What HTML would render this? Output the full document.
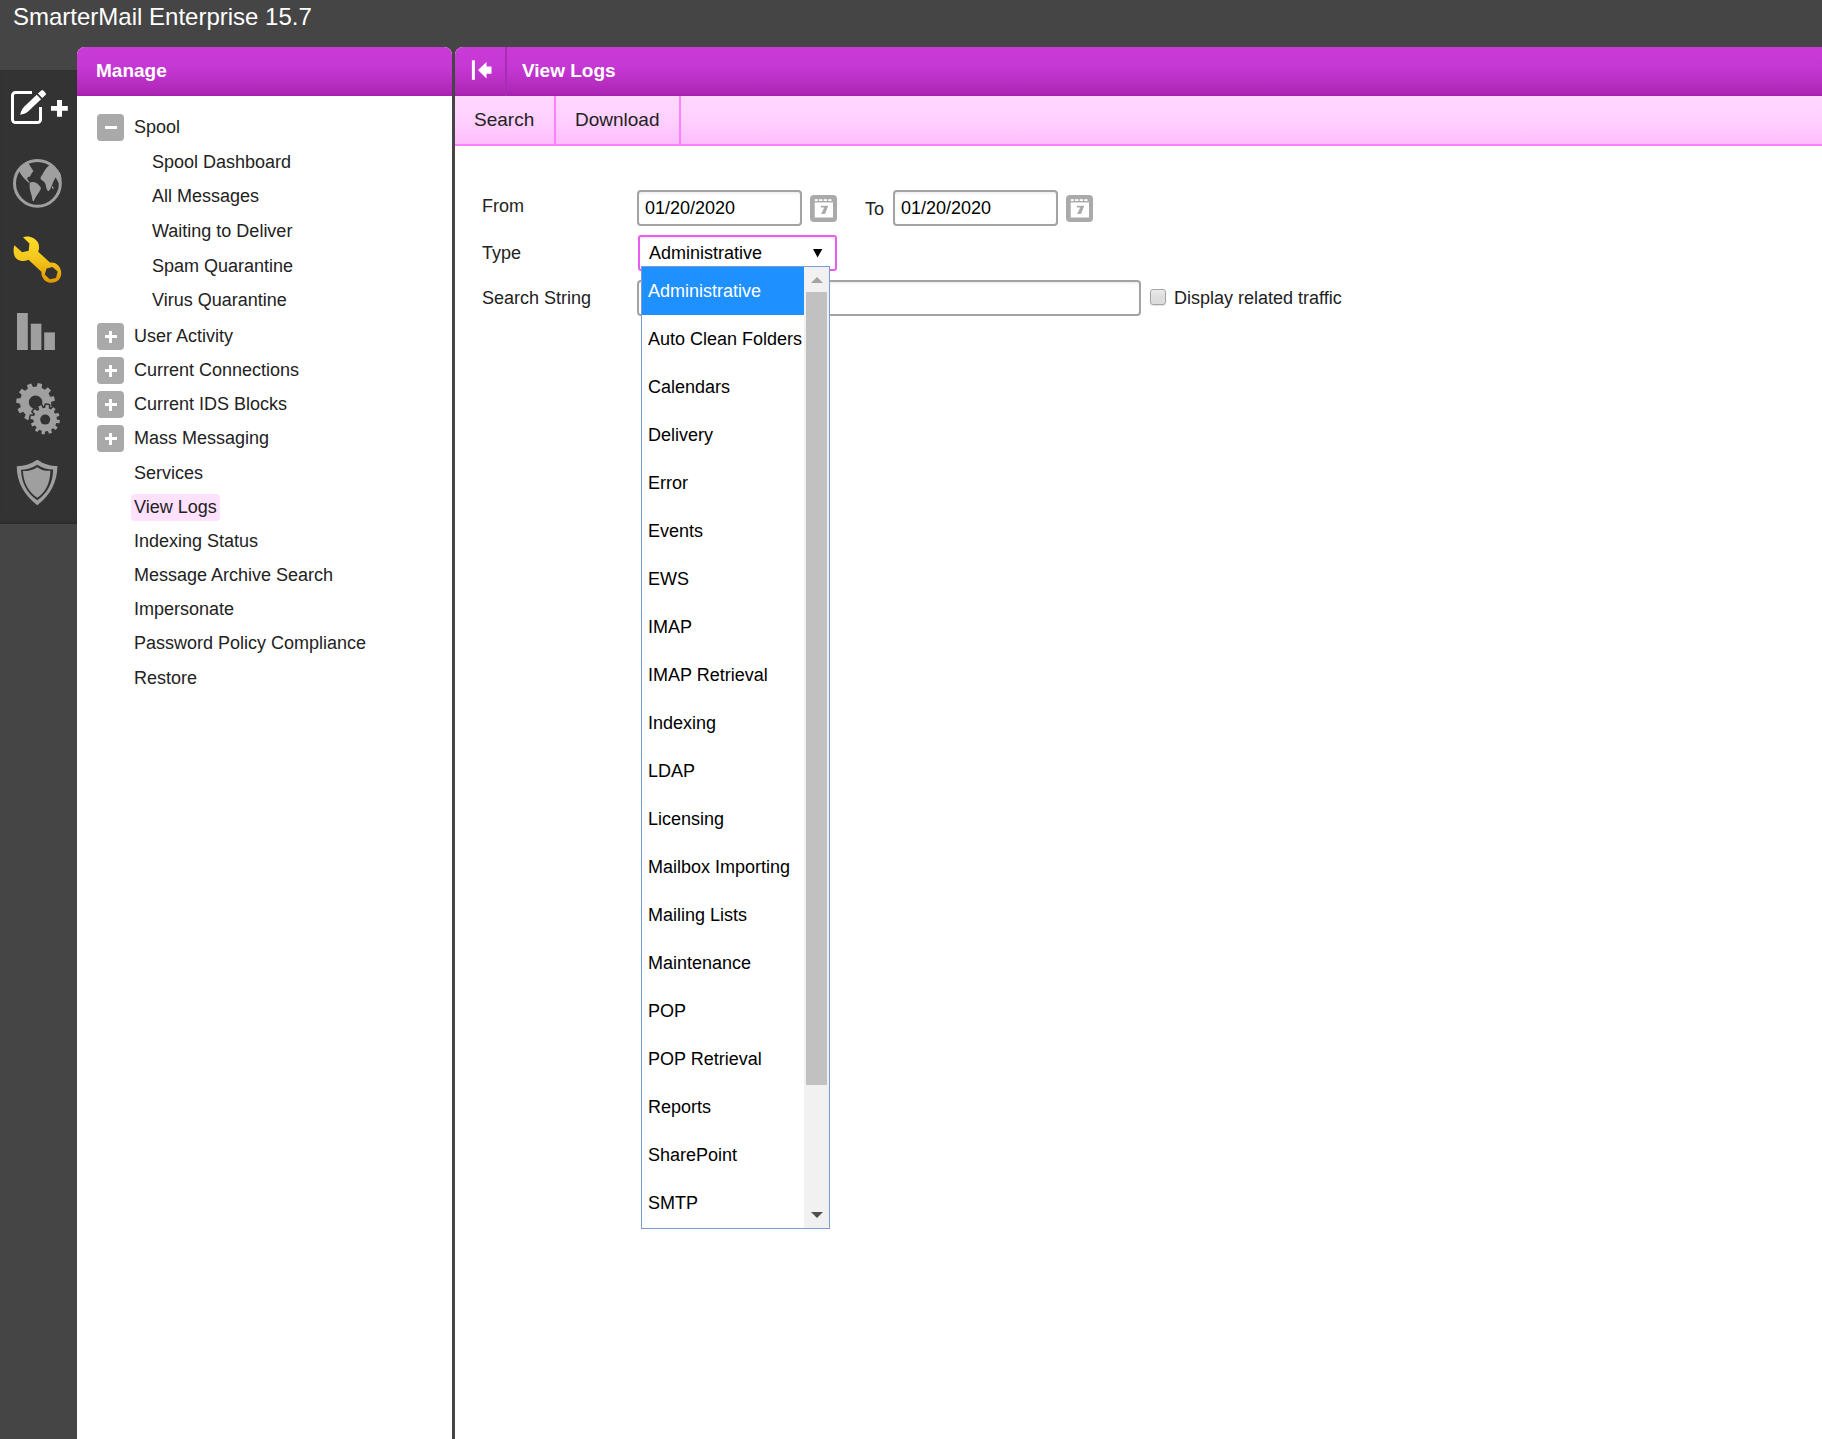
<!DOCTYPE html>
<html><head><meta charset="utf-8">
<style>
*{box-sizing:border-box;margin:0;padding:0}
html,body{width:1822px;height:1439px;overflow:hidden;background:#454545;font-family:"Liberation Sans",sans-serif;font-size:18px;color:#222}
.abs{position:absolute}
.t{position:absolute;white-space:nowrap;line-height:20px}
#title{left:13px;top:3px;font-size:24px;color:#fff;line-height:28px}
#rail{left:0;top:70px;width:77px;height:454px;background:#333;box-shadow:inset 0 -3px 3px -1px rgba(0,0,0,.15)}
.panel{position:absolute;top:47px;background:#fff}
#left{left:77px;width:375px;height:1392px;border-radius:8px 8px 0 0;overflow:hidden}
#right{left:455px;width:1367px;height:1392px;border-radius:8px 0 0 0;overflow:hidden}
.hdr{position:absolute;left:0;top:0;right:0;height:49px;background:linear-gradient(#c93ad6 0%,#c638d4 40%,#b42cbe 80%,#ab25b4 96%,#a61fae 100%)}
.hdr .t{color:#fff;font-weight:bold;font-size:19px}
#tb{position:absolute;left:0;top:49px;right:0;height:50px;background:linear-gradient(#ffd8ff 0%,#ffd0ff 50%,#ffbdfc 100%);border-bottom:2px solid #ff80ff}
.box{position:absolute;width:27px;height:27px;background:#a9a9a9;border-radius:4px}
.box:before{content:"";position:absolute;left:8px;top:12px;width:12px;height:3px;background:#fff}
.box.p:after{content:"";position:absolute;left:12px;top:8px;width:3px;height:12px;background:#fff}
.inp{position:absolute;border:2px solid #a3a3a3;border-radius:4px;background:#fff;box-shadow:inset 0 2px 2px rgba(0,0,0,.06)}
.cal{position:absolute;width:27px;height:27px;background:#a3a3a3;border-radius:5px}
.dd{position:absolute;left:641px;top:266px;width:189px;height:963px;border:1px solid #7c9bd0;background:#fff}
.opt{position:absolute;left:0;width:162px;height:48px}
</style></head><body>
<div id="title" class="t">SmarterMail Enterprise 15.7</div>
<div id="rail" class="abs"></div>

<svg class="abs" style="left:0;top:0" width="77" height="523" viewBox="0 0 77 523">
 <defs>
  <linearGradient id="wg" x1="0" y1="0" x2="0" y2="1"><stop offset="0" stop-color="#fddc28"/><stop offset="0.5" stop-color="#f3c51c"/><stop offset="1" stop-color="#de9600"/></linearGradient>
 </defs>
 <!-- compose icon -->
 <path d="M32,92.5 H15.5 a3,3 0 0 0 -3,3 V119.5 a3,3 0 0 0 3,3 H37.5 a3,3 0 0 0 3,-3 V107" fill="none" stroke="#fff" stroke-width="3"/>
 <g transform="translate(20.2,114.7) rotate(-43.5)" fill="#fff">
  <path d="M0,0 C2,-1.5 5,-3 8.3,-3.1 L25.8,-3.1 L25.8,3.1 L8.3,3.1 C5,3 2,1.5 0,0 Z"/>
  <path d="M27.4,-3.1 h4.6 a1.4,1.4 0 0 1 1.4,1.4 v3.4 a1.4,1.4 0 0 1 -1.4,1.4 h-4.6 Z"/>
 </g>
 <path d="M57,100 h5 v5.9 h5.8 v4.8 h-5.8 v6 h-5 v-6 h-6 v-4.8 h6 Z" fill="#fff"/>
 <!-- globe -->
 <g transform="translate(5,150) scale(0.04517)">
  <circle cx="718" cy="738" r="508" fill="none" stroke="#9f9f9f" stroke-width="66"/>
  <path fill="#9f9f9f" d="M300,450 C340,380 420,320 520,295 C550,340 590,410 630,470 C600,500 575,540 560,580 C530,595 495,600 490,625 C500,660 525,690 545,722 L520,725 C440,650 360,570 300,450 Z"/>
  <path fill="#9f9f9f" d="M548,722 C600,700 660,705 720,745 C770,790 800,830 795,860 C760,930 700,1010 660,1080 C645,1120 630,1145 610,1125 C600,1060 590,990 565,930 C545,860 540,790 548,722 Z"/>
  <path fill="#9f9f9f" d="M980,335 C1080,350 1170,420 1225,520 C1245,570 1250,620 1240,660 L1195,745 C1170,700 1150,650 1120,610 C1090,660 1060,720 1035,790 C1010,850 990,900 960,912 C925,900 910,830 900,765 C880,710 840,690 790,650 C780,610 800,570 830,540 C860,480 900,400 980,335 Z"/>
  <path fill="#9f9f9f" d="M1045,795 C1070,805 1085,840 1070,865 C1045,860 1030,830 1045,795 Z"/>
 </g>
 <!-- wrench -->
 <g transform="translate(5,230) scale(0.04517)">
  <path fill="url(#wg)" fill-rule="evenodd" d="M400,160 C520,120 680,170 740,300 C765,370 755,430 735,480 L1000,725 C1120,700 1240,800 1245,950 C1250,1080 1150,1170 1030,1170 C900,1170 800,1070 805,925 L520,660 C440,700 330,700 250,630 C180,560 180,450 205,340 L380,495 L525,460 L540,300 Z M1050,820 L1165,920 L1130,1060 L990,1090 L880,985 L920,850 Z"/>
 </g>
 <!-- chart -->
 <g fill="#9f9f9f">
  <rect x="17" y="313" width="10.8" height="37"/>
  <rect x="30.8" y="323.7" width="10.6" height="26.3"/>
  <rect x="44.2" y="332.4" width="10.7" height="17.6"/>
 </g>
 <!-- gears -->
 <path fill="#9f9f9f" fill-rule="evenodd" d="M49.40,395.02 L50.14,396.64 L54.05,396.30 L54.93,400.64 L51.19,401.85 L51.14,403.63 L50.89,405.40 L54.36,407.23 L52.76,411.35 L48.96,410.35 L47.95,411.83 L46.79,413.17 L48.72,416.59 L45.14,419.19 L42.48,416.30 L40.84,416.99 L39.13,417.49 L38.91,421.42 L34.49,421.67 L33.82,417.80 L32.07,417.49 L30.36,416.99 L28.05,420.17 L24.20,418.00 L25.73,414.38 L24.41,413.17 L23.25,411.83 L19.59,413.25 L17.52,409.34 L20.76,407.12 L20.31,405.40 L20.06,403.64 L16.21,402.86 L16.59,398.45 L20.51,398.34 L21.06,396.64 L21.80,395.02 L18.99,392.28 L21.69,388.78 L25.05,390.81 L26.43,389.68 L27.93,388.72 L27.04,384.89 L31.20,383.40 L32.94,386.93 L34.71,386.73 L36.49,386.73 L37.81,383.03 L42.12,384.03 L41.67,387.93 L43.27,388.72 L44.77,389.68 L47.88,387.28 L50.96,390.45 L48.48,393.49ZM28.80,402.30 a6.8,6.8 0 1,0 13.6,0 a6.8,6.8 0 1,0 -13.6,0Z"/>
 <path fill="#9f9f9f" stroke="#333" stroke-width="3.2" stroke-linejoin="round" paint-order="stroke" d="M56.73,418.31 L56.80,419.52 L59.98,420.27 L59.52,423.33 L56.26,423.11 L55.83,424.24 L55.29,425.33 L57.67,427.57 L55.74,429.99 L53.02,428.17 L52.08,428.94 L51.07,429.60 L52.01,432.74 L49.13,433.87 L47.69,430.93 L46.49,431.13 L45.28,431.20 L44.53,434.38 L41.47,433.92 L41.69,430.66 L40.56,430.23 L39.47,429.69 L37.23,432.07 L34.81,430.14 L36.63,427.42 L35.86,426.48 L35.20,425.47 L32.06,426.41 L30.93,423.53 L33.87,422.09 L33.67,420.89 L33.60,419.68 L30.42,418.93 L30.88,415.87 L34.14,416.09 L34.57,414.96 L35.11,413.87 L32.73,411.63 L34.66,409.21 L37.38,411.03 L38.32,410.26 L39.33,409.60 L38.39,406.46 L41.27,405.33 L42.71,408.27 L43.91,408.07 L45.12,408.00 L45.87,404.82 L48.93,405.28 L48.71,408.54 L49.84,408.97 L50.93,409.51 L53.17,407.13 L55.59,409.06 L53.77,411.78 L54.54,412.72 L55.20,413.73 L58.34,412.79 L59.47,415.67 L56.53,417.11Z"/>
 <circle cx="45.2" cy="419.6" r="5" fill="#333"/>
 <!-- shield -->
 <g transform="translate(5,450) scale(0.04517)">
  <path fill="#9f9f9f" d="M715,215 C560,320 420,350 260,360 C260,700 420,1000 715,1225 C1010,1000 1160,700 1160,355 C1000,350 870,320 715,215 Z"/>
  <path fill="#333" d="M715,325 C590,405 480,430 355,438 C360,720 490,960 715,1115 C940,960 1065,720 1065,433 C940,430 840,405 715,325 Z"/>
  <path fill="#9f9f9f" d="M715,380 C610,450 520,465 398,465 C405,720 520,930 715,1058 C910,930 1000,720 1005,460 C890,465 820,450 715,380 Z"/>
 </g>
</svg>


<div id="left" class="panel">
  <div class="hdr"><div class="t" style="left:19px;top:14px">Manage</div></div>
</div>

<div id="right" class="panel">
  <div class="hdr">
    <div class="abs" style="left:50px;top:0;width:2px;height:49px;background:#a92cb5"></div>
    <div class="t" style="left:67px;top:14px">View Logs</div>
  </div>
  <div id="tb">
    <div class="abs" style="left:99px;top:0;width:2px;height:48px;background:#ff80ff"></div>
    <div class="abs" style="left:224px;top:0;width:2px;height:48px;background:#ff80ff"></div>
  </div>
</div>

<div class="abs" style="left:131px;top:494px;width:89px;height:27px;background:#fde1fd;border-radius:4px"></div>
<div class="box" style="left:97px;top:114px"></div>
<div class="t" style="left:134px;top:117px">Spool</div>
<div class="t" style="left:152px;top:152px">Spool Dashboard</div>
<div class="t" style="left:152px;top:186px">All Messages</div>
<div class="t" style="left:152px;top:221px">Waiting to Deliver</div>
<div class="t" style="left:152px;top:256px">Spam Quarantine</div>
<div class="t" style="left:152px;top:290px">Virus Quarantine</div>
<div class="box p" style="left:97px;top:323px"></div>
<div class="t" style="left:134px;top:326px">User Activity</div>
<div class="box p" style="left:97px;top:357px"></div>
<div class="t" style="left:134px;top:360px">Current Connections</div>
<div class="box p" style="left:97px;top:391px"></div>
<div class="t" style="left:134px;top:394px">Current IDS Blocks</div>
<div class="box p" style="left:97px;top:425px"></div>
<div class="t" style="left:134px;top:428px">Mass Messaging</div>
<div class="t" style="left:134px;top:463px">Services</div>
<div class="t" style="left:134px;top:497px">View Logs</div>
<div class="t" style="left:134px;top:531px">Indexing Status</div>
<div class="t" style="left:134px;top:565px">Message Archive Search</div>
<div class="t" style="left:134px;top:599px">Impersonate</div>
<div class="t" style="left:134px;top:633px">Password Policy Compliance</div>
<div class="t" style="left:134px;top:668px">Restore</div>
<div class="t" style="left:474px;top:110px;font-size:19px">Search</div>
<div class="t" style="left:575px;top:110px;font-size:19px">Download</div>
<div class="t" style="left:482px;top:196px">From</div>
<div class="t" style="left:482px;top:243px">Type</div>
<div class="t" style="left:482px;top:288px">Search String</div>
<div class="inp" style="left:637px;top:190px;width:165px;height:36px"></div>
<div class="t" style="left:645px;top:198px;color:#000">01/20/2020</div>
<svg class="abs" style="left:805px;top:190px" width="36" height="36" viewBox="805 190 36 36"><g transform="translate(0,0)"></g><g transform="translate(0,0)"><rect x="810" y="195" width="27" height="27" rx="4" fill="#aaa"/><rect x="814.75" y="202.4" width="18.25" height="15.1" fill="#fff"/><g fill="#fff"><rect x="814.75" y="199.2" width="3.15" height="1.8"/><rect x="819.1" y="199.2" width="3.3" height="1.8"/><rect x="823.75" y="199.2" width="3.25" height="1.8"/><rect x="828.25" y="199.2" width="3.25" height="1.8"/></g><path fill="#aaa" d="M821,205.7 L828.2,205.7 L827.6,207.5 L825,214.1 L821.2,214.1 L824.2,207.5 L820.6,207.5 Z"/></g></svg>
<div class="t" style="left:865px;top:199px">To</div>
<div class="inp" style="left:893px;top:190px;width:165px;height:36px"></div>
<div class="t" style="left:901px;top:198px;color:#000">01/20/2020</div>
<svg class="abs" style="left:1061px;top:190px" width="36" height="36" viewBox="805 190 36 36"><g transform="translate(-256,0)"></g><g transform="translate(0,0)"><rect x="810" y="195" width="27" height="27" rx="4" fill="#aaa"/><rect x="814.75" y="202.4" width="18.25" height="15.1" fill="#fff"/><g fill="#fff"><rect x="814.75" y="199.2" width="3.15" height="1.8"/><rect x="819.1" y="199.2" width="3.3" height="1.8"/><rect x="823.75" y="199.2" width="3.25" height="1.8"/><rect x="828.25" y="199.2" width="3.25" height="1.8"/></g><path fill="#aaa" d="M821,205.7 L828.2,205.7 L827.6,207.5 L825,214.1 L821.2,214.1 L824.2,207.5 L820.6,207.5 Z"/></g></svg>
<div class="inp" style="left:637.5px;top:235px;width:199px;height:36px;border:2px solid #e95cf0;border-radius:3px"></div>
<div class="t" style="left:649px;top:243px;color:#000">Administrative</div>
<svg class="abs" style="left:805px;top:240px" width="25" height="25" viewBox="805 240 25 25"><path d="M813,248.9 L822.3,248.9 L817.6,257.4 Z" fill="#000"/></svg>
<div class="inp" style="left:637px;top:280px;width:504px;height:36px"></div>
<div class="abs" style="left:1150px;top:289px;width:16px;height:16px;border:1.3px solid #a4a4a4;border-radius:3px;background:linear-gradient(#ececec,#dedede 45%,#dcdcdc);box-shadow:0 1px 1px rgba(0,0,0,.12)"></div>
<div class="t" style="left:1174px;top:288px">Display related traffic</div>
<div class="dd">
<div class="opt" style="top:0px;background:#1e90ff;color:#fff;"><div class="t" style="left:6px;top:14px">Administrative</div></div>
<div class="opt" style="top:48px;color:#000;"><div class="t" style="left:6px;top:14px">Auto Clean Folders</div></div>
<div class="opt" style="top:96px;color:#000;"><div class="t" style="left:6px;top:14px">Calendars</div></div>
<div class="opt" style="top:144px;color:#000;"><div class="t" style="left:6px;top:14px">Delivery</div></div>
<div class="opt" style="top:192px;color:#000;"><div class="t" style="left:6px;top:14px">Error</div></div>
<div class="opt" style="top:240px;color:#000;"><div class="t" style="left:6px;top:14px">Events</div></div>
<div class="opt" style="top:288px;color:#000;"><div class="t" style="left:6px;top:14px">EWS</div></div>
<div class="opt" style="top:336px;color:#000;"><div class="t" style="left:6px;top:14px">IMAP</div></div>
<div class="opt" style="top:384px;color:#000;"><div class="t" style="left:6px;top:14px">IMAP Retrieval</div></div>
<div class="opt" style="top:432px;color:#000;"><div class="t" style="left:6px;top:14px">Indexing</div></div>
<div class="opt" style="top:480px;color:#000;"><div class="t" style="left:6px;top:14px">LDAP</div></div>
<div class="opt" style="top:528px;color:#000;"><div class="t" style="left:6px;top:14px">Licensing</div></div>
<div class="opt" style="top:576px;color:#000;"><div class="t" style="left:6px;top:14px">Mailbox Importing</div></div>
<div class="opt" style="top:624px;color:#000;"><div class="t" style="left:6px;top:14px">Mailing Lists</div></div>
<div class="opt" style="top:672px;color:#000;"><div class="t" style="left:6px;top:14px">Maintenance</div></div>
<div class="opt" style="top:720px;color:#000;"><div class="t" style="left:6px;top:14px">POP</div></div>
<div class="opt" style="top:768px;color:#000;"><div class="t" style="left:6px;top:14px">POP Retrieval</div></div>
<div class="opt" style="top:816px;color:#000;"><div class="t" style="left:6px;top:14px">Reports</div></div>
<div class="opt" style="top:864px;color:#000;"><div class="t" style="left:6px;top:14px">SharePoint</div></div>
<div class="opt" style="top:912px;color:#000;"><div class="t" style="left:6px;top:14px">SMTP</div></div>
<div class="abs" style="left:162px;top:0;width:25px;height:961px;background:#f1f1f1"></div>
<div class="abs" style="left:164px;top:25px;width:21px;height:793px;background:#c1c1c1"></div>
<div class="abs" style="left:169px;top:10px;width:0;height:0;border-left:6px solid transparent;border-right:6px solid transparent;border-bottom:6px solid #a3a3a3"></div>
<div class="abs" style="left:169px;top:945px;width:0;height:0;border-left:6px solid transparent;border-right:6px solid transparent;border-top:6px solid #505050"></div>
</div>
<svg class="abs" style="left:462px;top:52px" width="40" height="40" viewBox="462 52 40 40"><rect x="471.9" y="60.3" width="3" height="19.5" fill="#fff"/><path fill="#fff" d="M478,70.1 L486.5,61.9 L486.5,66.4 L491.5,66.4 L491.5,73.7 L486.5,73.7 L486.5,78.4 Z"/></svg>
</body></html>
